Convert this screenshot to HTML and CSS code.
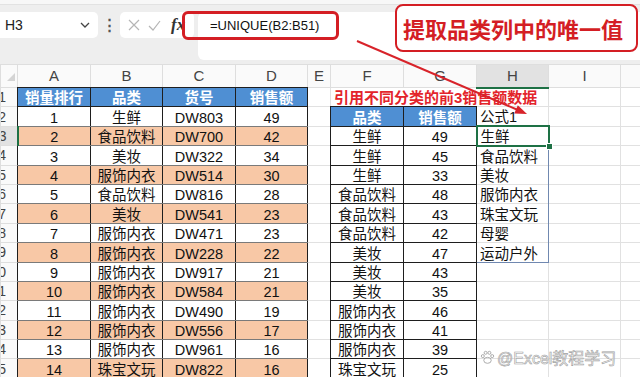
FILE: index.html
```html
<!DOCTYPE html>
<html lang="zh-CN">
<head>
    <meta charset="UTF-8">
    <title>UNIQUE</title>
    <link rel="stylesheet" href="styles.css">
</head>
<body>
    <div class="toolbar">
        <div class="namebox">
            <span>H3</span>
            <svg class="chev" width="10" height="6" viewBox="0 0 10 6"><path d="M1 1l4 4 4-4" fill="none" stroke="#444" stroke-width="1.3"/></svg>
        </div>
        <div class="dots">&#8942;</div>
        <div class="fxbox">
            <svg width="12" height="12" viewBox="0 0 12 12"><path d="M1 1l10 10M11 1L1 11" stroke="#b5b5b5" stroke-width="1.2"/></svg>
            <svg width="13" height="11" viewBox="0 0 13 11"><path d="M1 6l4 4 7-9" fill="none" stroke="#b5b5b5" stroke-width="1.2"/></svg>
            <span class="fx">fx</span>
        </div>
        <div class="input">=UNIQUE(B2:B51)</div>
    </div>

    <table class="sheet">
        <colgroup>
            <col style="width:17px"><col style="width:73px"><col style="width:72px"><col style="width:73px"><col style="width:72px">
            <col style="width:23px"><col style="width:73px"><col style="width:73px"><col style="width:72px"><col style="width:72px"><col style="width:20px">
        </colgroup>
        <tr class="colhead">
            <th class="corner"><svg width="8" height="8" viewBox="0 0 8 8"><path d="M8 0v8H0z" fill="#d4d4d4"/></svg></th>
            <th>A</th><th>B</th><th>C</th><th>D</th><th>E</th><th>F</th><th>G</th><th class="cur">H</th><th>I</th><th></th>
        </tr>
        <tr>
            <th class="rh">1</th>
            <td class="hd">销量排行</td><td class="hd">品类</td><td class="hd">货号</td><td class="hd">销售额</td>
            <td></td><td class="note" colspan="3">引用不同分类的前3销售额数据</td><td></td><td></td>
        </tr>
        <tr>
            <th class="rh">2</th>
            <td class="d">1</td><td class="d">生鲜</td><td class="d">DW803</td><td class="d">49</td>
            <td></td><td class="hd r">品类</td><td class="hd r">销售额</td><td class="h">公式1</td><td></td><td></td>
        </tr>
        <tr>
            <th class="rh cur">3</th>
            <td class="d pk">2</td><td class="d pk">食品饮料</td><td class="d pk">DW700</td><td class="d pk">42</td>
            <td></td><td class="r">生鲜</td><td class="r">49</td><td class="h sel">生鲜</td><td></td><td></td>
        </tr>
        <tr>
            <th class="rh">4</th>
            <td class="d">3</td><td class="d">美妆</td><td class="d">DW322</td><td class="d">34</td>
            <td></td><td class="r">生鲜</td><td class="r">45</td><td class="h sp">食品饮料</td><td></td><td></td>
        </tr>
        <tr>
            <th class="rh">5</th>
            <td class="d pk">4</td><td class="d pk">服饰内衣</td><td class="d pk">DW514</td><td class="d pk">30</td>
            <td></td><td class="r">生鲜</td><td class="r">33</td><td class="h sp">美妆</td><td></td><td></td>
        </tr>
        <tr>
            <th class="rh">6</th>
            <td class="d">5</td><td class="d">食品饮料</td><td class="d">DW816</td><td class="d">28</td>
            <td></td><td class="r">食品饮料</td><td class="r">48</td><td class="h sp">服饰内衣</td><td></td><td></td>
        </tr>
        <tr>
            <th class="rh">7</th>
            <td class="d pk">6</td><td class="d pk">美妆</td><td class="d pk">DW541</td><td class="d pk">23</td>
            <td></td><td class="r">食品饮料</td><td class="r">43</td><td class="h sp">珠宝文玩</td><td></td><td></td>
        </tr>
        <tr>
            <th class="rh">8</th>
            <td class="d">7</td><td class="d">服饰内衣</td><td class="d">DW471</td><td class="d">23</td>
            <td></td><td class="r">食品饮料</td><td class="r">42</td><td class="h sp">母婴</td><td></td><td></td>
        </tr>
        <tr>
            <th class="rh">9</th>
            <td class="d pk">8</td><td class="d pk">服饰内衣</td><td class="d pk">DW228</td><td class="d pk">22</td>
            <td></td><td class="r">美妆</td><td class="r">47</td><td class="h sp last">运动户外</td><td></td><td></td>
        </tr>
        <tr>
            <th class="rh">10</th>
            <td class="d">9</td><td class="d">服饰内衣</td><td class="d">DW917</td><td class="d">21</td>
            <td></td><td class="r">美妆</td><td class="r">43</td><td></td><td></td><td></td>
        </tr>
        <tr>
            <th class="rh">11</th>
            <td class="d pk">10</td><td class="d pk">服饰内衣</td><td class="d pk">DW584</td><td class="d pk">21</td>
            <td></td><td class="r">美妆</td><td class="r">35</td><td></td><td></td><td></td>
        </tr>
        <tr>
            <th class="rh">12</th>
            <td class="d">11</td><td class="d">服饰内衣</td><td class="d">DW490</td><td class="d">19</td>
            <td></td><td class="r">服饰内衣</td><td class="r">46</td><td></td><td></td><td></td>
        </tr>
        <tr>
            <th class="rh">13</th>
            <td class="d pk">12</td><td class="d pk">服饰内衣</td><td class="d pk">DW556</td><td class="d pk">17</td>
            <td></td><td class="r">服饰内衣</td><td class="r">41</td><td></td><td></td><td></td>
        </tr>
        <tr>
            <th class="rh">14</th>
            <td class="d">13</td><td class="d">服饰内衣</td><td class="d">DW961</td><td class="d">16</td>
            <td></td><td class="r">服饰内衣</td><td class="r">39</td><td></td><td></td><td></td>
        </tr>
        <tr>
            <th class="rh">15</th>
            <td class="d pk">14</td><td class="d pk">珠宝文玩</td><td class="d pk">DW822</td><td class="d pk">16</td>
            <td></td><td class="r">珠宝文玩</td><td class="r">25</td><td></td><td></td><td></td>
        </tr>
    </table>

    <!-- annotations drawn over the sheet -->
    <div class="mark-formula"></div>
    <div class="callout">提取品类列中的唯一值</div>
    <svg class="arrow" width="640" height="377" viewBox="0 0 640 377">
        <line x1="357" y1="41" x2="518" y2="110" stroke="#d8232a" stroke-width="2"/>
        <polygon points="527,114 514.2,113.4 517.8,105.2" fill="#d8232a"/>
    </svg>
    <div class="watermark">
        <svg width="15" height="15" viewBox="0 0 16 16"><g fill="none" stroke="#a8a8a8" stroke-width="1"><ellipse cx="8" cy="11" rx="4" ry="3.2"/><circle cx="3" cy="6.5" r="1.6"/><circle cx="6" cy="3" r="1.6"/><circle cx="10" cy="3" r="1.6"/><circle cx="13" cy="6.5" r="1.6"/></g></svg>
        <span>@Excel教程学习</span>
    </div>
</body>
</html>
```

FILE: styles.css
```css
body {
    margin: 0;
    width: 640px;
    height: 377px;
    overflow: hidden;
    position: relative;
    background-color: #ffffff;
    font-family: "Liberation Sans", "Noto Sans CJK SC", sans-serif;
    color: #111111;
}
.toolbar {
    height: 64px;
    box-sizing: border-box;
    padding-top: 12px;
    display: flex;
    align-items: flex-start;
    background-color: #eeeeee;
    box-shadow: inset 0 4px 0 #f7f7f7, inset 0 5px 0 #e2e2e2;
}
.namebox {
    width: 102px;
    height: 26px;
    margin-left: -4px;
    box-sizing: border-box;
    padding: 0 8px 0 9px;
    display: flex;
    align-items: center;
    justify-content: space-between;
    background-color: #ffffff;
    border-radius: 5px;
    font-size: 14px;
    color: #222222;
}
.dots {
    width: 22px;
    height: 26px;
    line-height: 26px;
    text-align: center;
    font-size: 15px;
    font-weight: bold;
    color: #555555;
}
.fxbox {
    width: 74px;
    height: 26px;
    box-sizing: border-box;
    padding-left: 8px;
    display: flex;
    align-items: center;
    gap: 8px;
    background-color: #ffffff;
    border-radius: 5px;
}
.fx {
    font-family: "Liberation Serif", serif;
    font-style: italic;
    font-weight: bold;
    font-size: 17px;
    color: #333333;
    margin-left: 2px;
}
.input {
    flex: 1;
    height: 48px;
    margin-left: 4px;
    box-sizing: border-box;
    padding: 6px 0 0 12px;
    background-color: #ffffff;
    border-radius: 6px 0 0 6px;
    font-size: 13px;
    color: #111111;
}
.sheet {
    border-collapse: collapse;
    table-layout: fixed;
    width: 640px;
}
.sheet tr {
    height: 19.4px;
}
.sheet tr.colhead {
    height: 23px;
}
.sheet td,
.sheet th {
    padding: 0 2px;
    font-size: 14.5px;
    line-height: 16px;
    text-align: center;
    vertical-align: bottom;
    white-space: nowrap;
    overflow: hidden;
    border: 1px solid #e1e1e1;
    font-weight: normal;
}
.colhead th {
    background-color: #fafafa;
    color: #444444;
    font-size: 15px;
    vertical-align: middle;
    border-color: #dedede;
}
.colhead th.cur {
    background-color: #e2e2e2;
    border-bottom: 2px solid #1e7145;
}
.colhead .corner {
    text-align: right;
    padding: 0 2px 0 0;
}
.sheet th.rh {
    direction: rtl;
    text-align: right;
    padding: 0 11px 0 0;
    background-color: #fafafa;
    color: #444444;
    font-size: 14px;
    vertical-align: middle;
    border-color: #dedede;
}
.sheet th.rh.cur {
    background-color: #e2e2e2;
    border-right: 2px solid #1e7145;
}
.sheet td.d {
    border: 1px double #7a7a7a;
    border-left-color: #1e1e1e;
    border-right-color: #1e1e1e;
}
.sheet td.r {
    border: 1px double #1e1e1e;
}
.sheet td.hd {
    background-color: #4f8fd3;
    color: #ffffff;
    font-weight: bold;
    border: 1px double #1e1e1e;
}
.sheet td.pk {
    background-color: #f8c8a6;
}
.sheet td.note {
    text-align: left;
    padding-left: 3px;
    color: #e3242b;
    font-weight: bold;
    font-size: 15px;
    overflow: visible;
}
.sheet td.h {
    text-align: left;
    padding-left: 3px;
}
.sheet td.sel {
    border: 2px solid #1e7145;
    position: relative;
    overflow: visible;
}
.sheet td.sel::after {
    content: "";
    position: absolute;
    right: -5px;
    bottom: -5px;
    width: 5px;
    height: 5px;
    background-color: #1e7145;
    border: 1px solid #ffffff;
}
.sheet td.sp {
    border-right: 1px double #7088b0;
}
.sheet td.sp.last {
    border-bottom: 1px double #7088b0;
}
.mark-formula {
    position: absolute;
    left: 182px;
    top: 11px;
    width: 157px;
    height: 29px;
    box-sizing: border-box;
    border: 3px solid #d41e24;
    border-radius: 6px;
}
.callout {
    position: absolute;
    left: 395px;
    top: 4px;
    width: 243px;
    height: 48px;
    box-sizing: border-box;
    padding-left: 6px;
    border: 2px solid #d41e24;
    border-radius: 8px;
    background-color: #ffffff;
    color: #d41e24;
    font-family: "Noto Sans CJK SC", sans-serif;
    font-weight: bold;
    font-size: 22px;
    line-height: 44px;
    white-space: nowrap;
}
.arrow {
    position: absolute;
    left: 0;
    top: 0;
}
.watermark {
    position: absolute;
    left: 480px;
    top: 345px;
    display: flex;
    align-items: center;
    gap: 2px;
    font-size: 16px;
    color: rgba(255, 255, 255, 0.75);
    -webkit-text-stroke: 0.6px #a0a0a0;
    white-space: nowrap;
}
```
